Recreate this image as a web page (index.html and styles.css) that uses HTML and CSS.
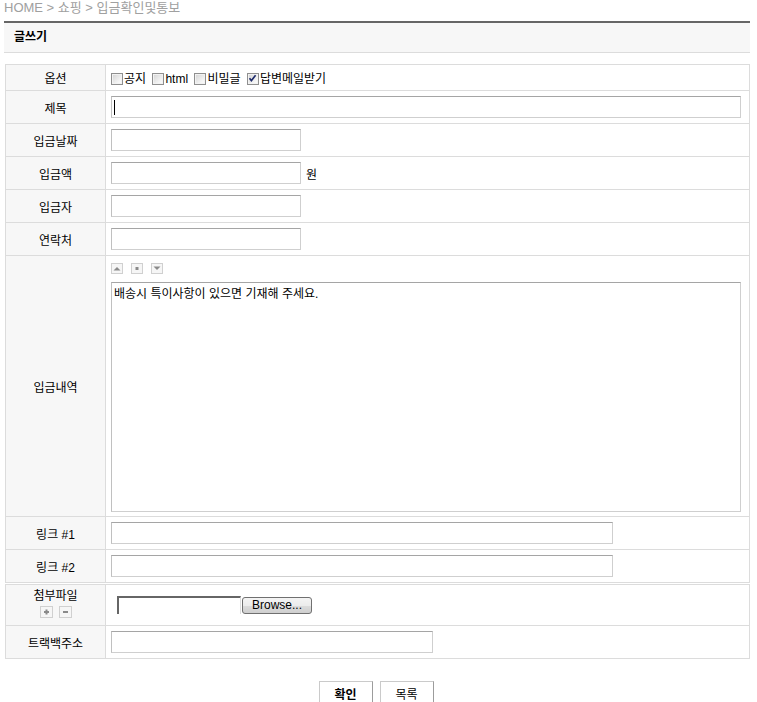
FILE: index.html
```html
<!DOCTYPE html>
<html lang="ko">
<head>
<meta charset="utf-8">
<title>글쓰기</title>
<link rel="stylesheet" href="styles.css">
</head>
<body>
<div class="page">
  <div class="crumb">HOME &gt; 쇼핑 &gt; 입금확인및통보</div>
  <h2 class="title">글쓰기</h2>

  <table class="form">
    <colgroup><col class="c-label"><col></colgroup>
    <tr class="r-opt">
      <th>옵션</th>
      <td>
        <span class="opt"><span class="cb"></span>공지</span>
        <span class="opt"><span class="cb"></span>html</span>
        <span class="opt"><span class="cb"></span>비밀글</span>
        <span class="opt"><span class="cb checked"><svg viewBox="0 0 11 11" width="11" height="11"><path d="M2.5 5.2 L4.4 7.6 L8.6 2.2" fill="none" stroke="#1d2a6b" stroke-width="1.6"/></svg></span>답변메일받기</span>
      </td>
    </tr>
    <tr><th>제목</th><td><input class="inp w-full caret" type="text"></td></tr>
    <tr><th>입금날짜</th><td><input class="inp w-s" type="text"></td></tr>
    <tr><th>입금액</th><td><input class="inp w-s" type="text"><span class="unit">원</span></td></tr>
    <tr><th>입금자</th><td><input class="inp w-s" type="text"></td></tr>
    <tr><th>연락처</th><td><input class="inp w-s" type="text"></td></tr>
    <tr class="r-editor">
      <th>입금내역</th>
      <td>
        <div class="ctls">
          <span class="ctl"><svg viewBox="0 0 10 9" width="10" height="9"><path d="M1.5 6.5 L5 3 L8.5 6.5 Z" fill="#8a8a8a"/></svg></span>
          <span class="ctl"><svg viewBox="0 0 10 9" width="10" height="9"><rect x="3.5" y="3" width="3" height="3" fill="#8a8a8a"/></svg></span>
          <span class="ctl"><svg viewBox="0 0 10 9" width="10" height="9"><path d="M1.5 2.5 L8.5 2.5 L5 6 Z" fill="#8a8a8a"/></svg></span>
        </div>
        <textarea class="area">배송시 특이사항이 있으면 기재해 주세요.</textarea>
      </td>
    </tr>
    <tr><th>링크 #1</th><td><input class="inp w-m" type="text"></td></tr>
    <tr><th>링크 #2</th><td><input class="inp w-m" type="text"></td></tr>
  </table>

  <table class="form form2">
    <colgroup><col class="c-label"><col></colgroup>
    <tr class="r-file">
      <th>
        <div class="file-label">첨부파일</div>
        <div class="pm">
          <span class="pmb"><svg viewBox="0 0 11 10" width="11" height="10"><path d="M5.5 2.5 V7.5 M3 5 H8" stroke="#8a8a8a" stroke-width="2"/></svg></span>
          <span class="pmb"><svg viewBox="0 0 11 10" width="11" height="10"><path d="M3 5 H8" stroke="#8a8a8a" stroke-width="2"/></svg></span>
        </div>
      </th>
      <td>
        <span class="filebox"></span><span class="browse">Browse...</span>
      </td>
    </tr>
    <tr><th>트랙백주소</th><td><input class="inp w-t" type="text"></td></tr>
  </table>

  <div class="actions">
    <button class="btn btn-ok" type="button">확인</button>
    <button class="btn" type="button">목록</button>
  </div>
</div>
</body>
</html>
```

FILE: styles.css
```css
html, body {
  margin: 0;
  padding: 0;
  background: #fff;
}
body {
  font-family: "Liberation Sans", "Noto Sans CJK KR", sans-serif;
  font-size: 12px;
  color: #000;
}
.page {
  padding-left: 4px;
  width: 746px;
}
.crumb {
  height: 21px;
  line-height: 16px;
  font-size: 13px;
  color: #a0a0a0;
  white-space: nowrap;
}
.title {
  margin: 0;
  height: 29px;
  line-height: 29px;
  padding-left: 10px;
  border-top: 2px solid #666;
  border-bottom: 1px solid #dcdcdc;
  background: #f7f7f7;
  font-size: 12px;
  font-weight: bold;
}
.form {
  margin: 11px 0 0 1px;
  width: 745px;
  border-collapse: collapse;
  table-layout: fixed;
}
.form2 {
  margin-top: 1px;
}
.c-label {
  width: 100px;
}
.form th,
.form td {
  border: 1px solid #dcdcdc;
  padding: 0 5px;
  vertical-align: middle;
}
.form th {
  background: #f7f7f7;
  font-weight: normal;
  text-align: center;
  padding: 0;
}
.form tr {
  height: 33px;
}
.form tr.r-opt {
  height: 26px;
}
.form tr.r-editor {
  height: 261px;
}
.form tr.r-file {
  height: 41px;
}
.opt {
  margin-right: 3px;
  white-space: nowrap;
}
.cb {
  display: inline-block;
  box-sizing: border-box;
  width: 12px;
  height: 12px;
  border: 1px solid #8f8f8f;
  background: linear-gradient(135deg, #d2d2d2 0%, #f4f4f4 70%, #fcfcfc 100%);
  box-shadow: inset 0 0 0 1px #f2f2f2;
  vertical-align: -2px;
  margin-right: 1px;
  position: relative;
}
.cb svg {
  position: absolute;
  left: -1px;
  top: -1px;
}
.inp {
  box-sizing: border-box;
  height: 22px;
  margin: 0;
  padding: 0 3px;
  border: 1px solid #cfcfcf;
  border-top-color: #a5a5a5;
  border-left-color: #c0c0c0;
  background: #fff;
  font: 12px "Liberation Sans", "Noto Sans CJK KR", sans-serif;
  vertical-align: middle;
  outline: none;
}
.w-s { width: 190px; }
.w-m { width: 502px; }
.w-t { width: 322px; }
.w-full { width: 630px; }
.caret {
  background: #fff linear-gradient(#000, #000) no-repeat 2px 3px / 1px 15px;
}
.unit {
  margin-left: 5px;
  vertical-align: middle;
}
.r-editor td {
  vertical-align: top;
  padding-top: 7px;
}
.ctls {
  display: flex;
  gap: 8px;
  height: 11px;
}
.ctl {
  box-sizing: border-box;
  width: 12px;
  height: 11px;
  border: 1px solid #d0d0d0;
  background: #f6f6f6;
  display: flex;
  align-items: center;
  justify-content: center;
}
.area {
  display: block;
  box-sizing: border-box;
  width: 630px;
  height: 230px;
  margin: 8px 0 0 0;
  padding: 3px 2px;
  border: 1px solid #cfcfcf;
  border-top-color: #a5a5a5;
  border-left-color: #c0c0c0;
  font: 12px "Liberation Sans", "Noto Sans CJK KR", sans-serif;
  line-height: 16px;
  resize: none;
  outline: none;
}
.file-label {
  line-height: 14px;
  margin-top: -3px;
}
.pm {
  display: flex;
  justify-content: center;
  gap: 6px;
  margin-top: 3px;
}
.pmb {
  box-sizing: border-box;
  width: 13px;
  height: 12px;
  border: 1px solid #d0d0d0;
  background: #f6f6f6;
  display: flex;
  align-items: center;
  justify-content: center;
}
.r-file td {
  padding-left: 11px;
}
.filebox {
  display: inline-block;
  box-sizing: border-box;
  width: 124px;
  height: 18px;
  border-top: 2px solid #666;
  border-left: 2px solid #666;
  border-right: 1px solid #dedede;
  vertical-align: middle;
}
.browse {
  display: inline-block;
  box-sizing: border-box;
  width: 70px;
  height: 17px;
  margin-left: 1px;
  border: 1px solid #707070;
  border-radius: 3px;
  background: linear-gradient(#f4f4f4 0%, #ececec 50%, #dcdcdc 51%, #cfcfcf 100%);
  font: 12px "Liberation Sans", sans-serif;
  line-height: 15px;
  text-align: center;
  vertical-align: middle;
}
.actions {
  display: flex;
  justify-content: center;
  gap: 7px;
  margin-top: 22px;
  padding-right: 2px;
}
.btn {
  box-sizing: border-box;
  width: 54px;
  height: 25px;
  padding: 0;
  margin: 0;
  border: 1px solid #cacaca;
  border-right-color: #9c9c9c;
  border-bottom-color: #9c9c9c;
  background: #fff;
  font: 12px "Liberation Sans", "Noto Sans CJK KR", sans-serif;
  color: #000;
}
.btn-ok {
  font-weight: bold;
}
```
